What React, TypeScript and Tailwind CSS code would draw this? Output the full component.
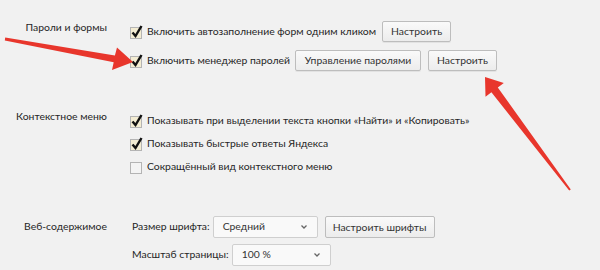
const Check = ({ checked }: { checked: boolean }) => (
	<svg width="16" height="16" viewBox="0 0 16 16" className="shrink-0">
		<rect x="1.5" y="3.5" width="11" height="11" fill={checked ? "#f3ecd2" : "#f4f4f4"} stroke="#b4b4b4" />
		{checked && <path d="M3.5 8.5 L6.5 12 L12.5 2" fill="none" stroke="#111" strokeWidth="2.4" strokeLinejoin="miter" />}
	</svg>
);

const Btn = ({ children, w }: { children: React.ReactNode; w?: string }) => (
	<button
		type="button"
		className={`h-[21px] whitespace-nowrap border border-[#bdbdbd] rounded-[2px] bg-gradient-to-b from-[#fafafa] to-[#ececec] text-[#333] leading-none shadow-[0_1px_0_rgba(0,0,0,0.06)] ${w ?? ""}`}>
		{children}
	</button>
);

const Row = ({ checked, children }: { checked: boolean; children: React.ReactNode }) => (
	<div className="flex items-center h-[23px]">
		<Check checked={checked} />
		<span className="ml-[2px]">{children}</span>
	</div>
);

const Select = ({ value, w }: { value: string; w: string }) => (
	<div className={`h-[22px] ${w} flex items-center justify-between pl-[9px] pr-[9px] border border-[#cfcfcf] rounded-[2px] bg-[#f9f9f9] text-[#333]`}>
		<span>{value}</span>
		<svg width="8" height="6" viewBox="0 0 8 6">
			<path d="M1.5 1.5 L4 4 L6.5 1.5" fill="none" stroke="#666" strokeWidth="1.3" />
		</svg>
	</div>
);

export default function App() {
	return (
		<div
			className="relative w-[600px] h-[270px] overflow-hidden whitespace-nowrap bg-[#f1f1f1] text-[#262626] text-[10.4px]"
			style={{ fontFamily: 'Lato, "Noto Sans", sans-serif' }}>
			{/* Пароли и формы */}
			<div className="flex items-start pt-[21px]">
				<div className="w-[107px] text-right -mt-[2px] leading-[16px]">Пароли и формы</div>
				<div className="ml-[22px] flex flex-col gap-[8px]">
					<div className="flex items-center h-[21px] gap-[6px]">
						<div className="flex items-center">
							<Check checked />
							<span className="ml-[2px]">Включить автозаполнение форм одним кликом</span>
						</div>
						<Btn w="w-[69px]">Настроить</Btn>
					</div>
					<div className="flex items-center h-[21px]">
						<div className="flex items-center">
							<Check checked />
							<span className="ml-[2px]">Включить менеджер паролей</span>
						</div>
						<div className="ml-[5px]">
							<Btn w="w-[126px]">Управление паролями</Btn>
						</div>
						<div className="ml-[7px]">
							<Btn w="w-[69px]">Настроить</Btn>
						</div>
					</div>
				</div>
			</div>

			{/* Контекстное меню */}
			<div className="flex items-start mt-[38px]">
				<div className="w-[107px] text-right -mt-[1px] leading-[16px]">Контекстное меню</div>
				<div className="ml-[22px] flex flex-col">
					<Row checked>Показывать при выделении текста кнопки «Найти» и «Копировать»</Row>
					<Row checked>Показывать быстрые ответы Яндекса</Row>
					<Row checked={false}>Сокращённый вид контекстного меню</Row>
				</div>
			</div>

			{/* Веб-содержимое */}
			<div className="flex items-start mt-[38px]">
				<div className="w-[107px] text-right mt-[2px] leading-[16px]">Веб-содержимое</div>
				<div className="ml-[25px] flex flex-col gap-[6px]">
					<div className="flex items-center">
						<span>Размер шрифта:</span>
						<div className="ml-[3px]">
							<Select value="Средний" w="w-[105px]" />
						</div>
						<div className="ml-[7px]">
							<button
								type="button"
								className="h-[22px] w-[110px] whitespace-nowrap border border-[#bdbdbd] rounded-[2px] bg-gradient-to-b from-[#fafafa] to-[#ececec] text-[#333] leading-none">
								Настроить шрифты
							</button>
						</div>
					</div>
					<div className="flex items-center">
						<span>Масштаб страницы:</span>
						<div className="ml-[3px]">
							<Select value="100 %" w="w-[99px]" />
						</div>
					</div>
				</div>
			</div>

			{/* arrows */}
			<svg className="absolute left-0 top-0 pointer-events-none" width="600" height="270" viewBox="0 0 600 270">
				<polygon
					points="5.2,37.6 114.9,55.4 117,47.5 133,62 112,70 113.7,62.2 4.8,40.4"
					fill="#e8362c"
				/>
				<polygon
					points="570.8,189.4 497.8,87.4 503.8,83 485,77 485.5,96.8 491.4,92.2 569.2,190.6"
					fill="#e8362c"
				/>
			</svg>
		</div>
	);
}
